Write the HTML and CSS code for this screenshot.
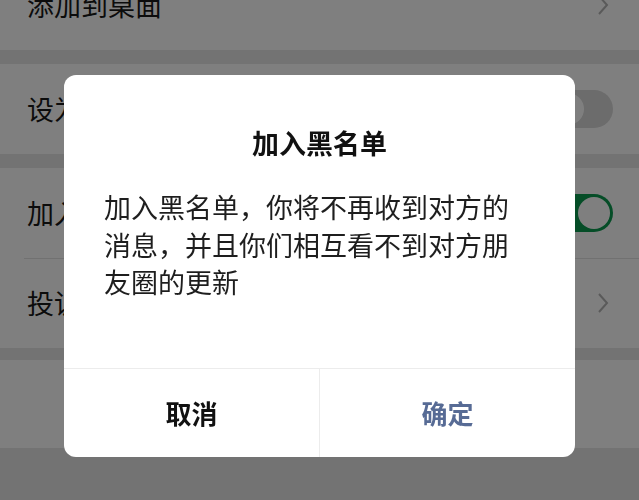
FILE: index.html
```html
<!DOCTYPE html>
<html lang="zh-CN">
<head>
  <meta charset="UTF-8">
  <title>资料设置</title>
  <link rel="stylesheet" href="styles.css">
</head>
<body>
  <div class="settings">

    <!-- 桌面快捷方式 -->
    <div class="cell-group">
      <div class="cell">
        <span class="cell-label">添加到桌面</span>
        <svg class="chevron" width="12" height="20" viewBox="0 0 12 20"><polyline points="2,1 10,10 2,19" /></svg>
      </div>
    </div>

    <!-- 星标 -->
    <div class="cell-group">
      <div class="cell">
        <span class="cell-label">设为星标朋友</span>
        <span class="switch"><span class="knob"></span></span>
      </div>
    </div>

    <!-- 黑名单 / 投诉 -->
    <div class="cell-group">
      <div class="cell">
        <span class="cell-label">加入黑名单</span>
        <span class="switch on"><span class="knob"></span></span>
      </div>
      <div class="cell">
        <span class="cell-label">投诉</span>
        <svg class="chevron" width="12" height="20" viewBox="0 0 12 20"><polyline points="2,1 10,10 2,19" /></svg>
      </div>
    </div>

    <div class="cell-group last">
      <div class="cell"></div>
    </div>

  </div>

  <div class="mask">
    <div class="dialog">
      <div class="dialog-title">加入黑名单</div>
      <div class="dialog-body">加入黑名单，你将不再收到对方的消息，并且你们相互看不到对方朋友圈的更新</div>
      <div class="dialog-footer">
        <button class="dialog-btn">取消</button>
        <button class="dialog-btn primary">确定</button>
      </div>
    </div>
  </div>
</body>
</html>
```

FILE: styles.css
```css
* {
  box-sizing: border-box;
}

body {
  font-family: "Noto Sans CJK SC", "Noto Sans", sans-serif;
  background-color: #e6e6e6;
  color: #191919;
  margin: 0;
  padding: 0;
  height: 500px;
  overflow: hidden;
}

/* Settings list (scrolled a little, so the first cell is cut at the top) */
.settings {
  display: flex;
  flex-direction: column;
  gap: 14px;
  margin-top: -40px;
}

.cell-group {
  background-color: #fff;
}

.cell {
  display: flex;
  align-items: center;
  justify-content: space-between;
  height: 90px;
  padding: 0 26px 0 27px;
  position: relative;
}

.cell-group.last {
  margin-top: -2px;
}

.cell-group.last .cell {
  height: 88px;
}

.cell + .cell::before {
  content: "";
  position: absolute;
  top: 0;
  left: 24px;
  right: 0;
  border-top: 1px solid #e2e2e2;
}

.cell-label {
  font-size: 27px;
  line-height: 36px;
}

.chevron {
  margin-right: 4px;
}

.chevron polyline {
  fill: none;
  stroke: #b4b4b4;
  stroke-width: 2;
}

/* Switch */
.switch {
  position: relative;
  width: 64px;
  height: 38px;
  border-radius: 19px;
  background-color: #d8d8d8;
}

.switch .knob {
  position: absolute;
  top: 3px;
  left: 3px;
  width: 32px;
  height: 32px;
  border-radius: 50%;
  background-color: #fff;
}

.switch.on {
  background-color: #0b9a4f;
}

.switch.on .knob {
  left: 29px;
}

/* Dialog */
.mask {
  position: fixed;
  top: 0;
  left: 0;
  right: 0;
  bottom: 0;
  background-color: rgba(0, 0, 0, 0.5);
  display: flex;
  justify-content: center;
  align-items: flex-start;
  padding-top: 75px;
}

.dialog {
  width: 511px;
  background-color: #fff;
  border-radius: 12px;
  overflow: hidden;
}

.dialog-title {
  padding-top: 50px;
  font-size: 27px;
  line-height: 36px;
  font-weight: bold;
  text-align: center;
  color: #111;
}

.dialog-body {
  padding: 27px 40px 67px;
  font-size: 27px;
  line-height: 37.5px;
  color: #1e1e1e;
}

.dialog-footer {
  display: flex;
  border-top: 1px solid #ececec;
}

.dialog-btn {
  flex: 1;
  height: 88px;
  border: none;
  background: none;
  font-family: inherit;
  font-size: 26px;
  font-weight: bold;
  color: #111;
  padding: 0;
}

.dialog-btn + .dialog-btn {
  border-left: 1px solid #ececec;
}

.dialog-btn.primary {
  color: #576b95;
}
```
